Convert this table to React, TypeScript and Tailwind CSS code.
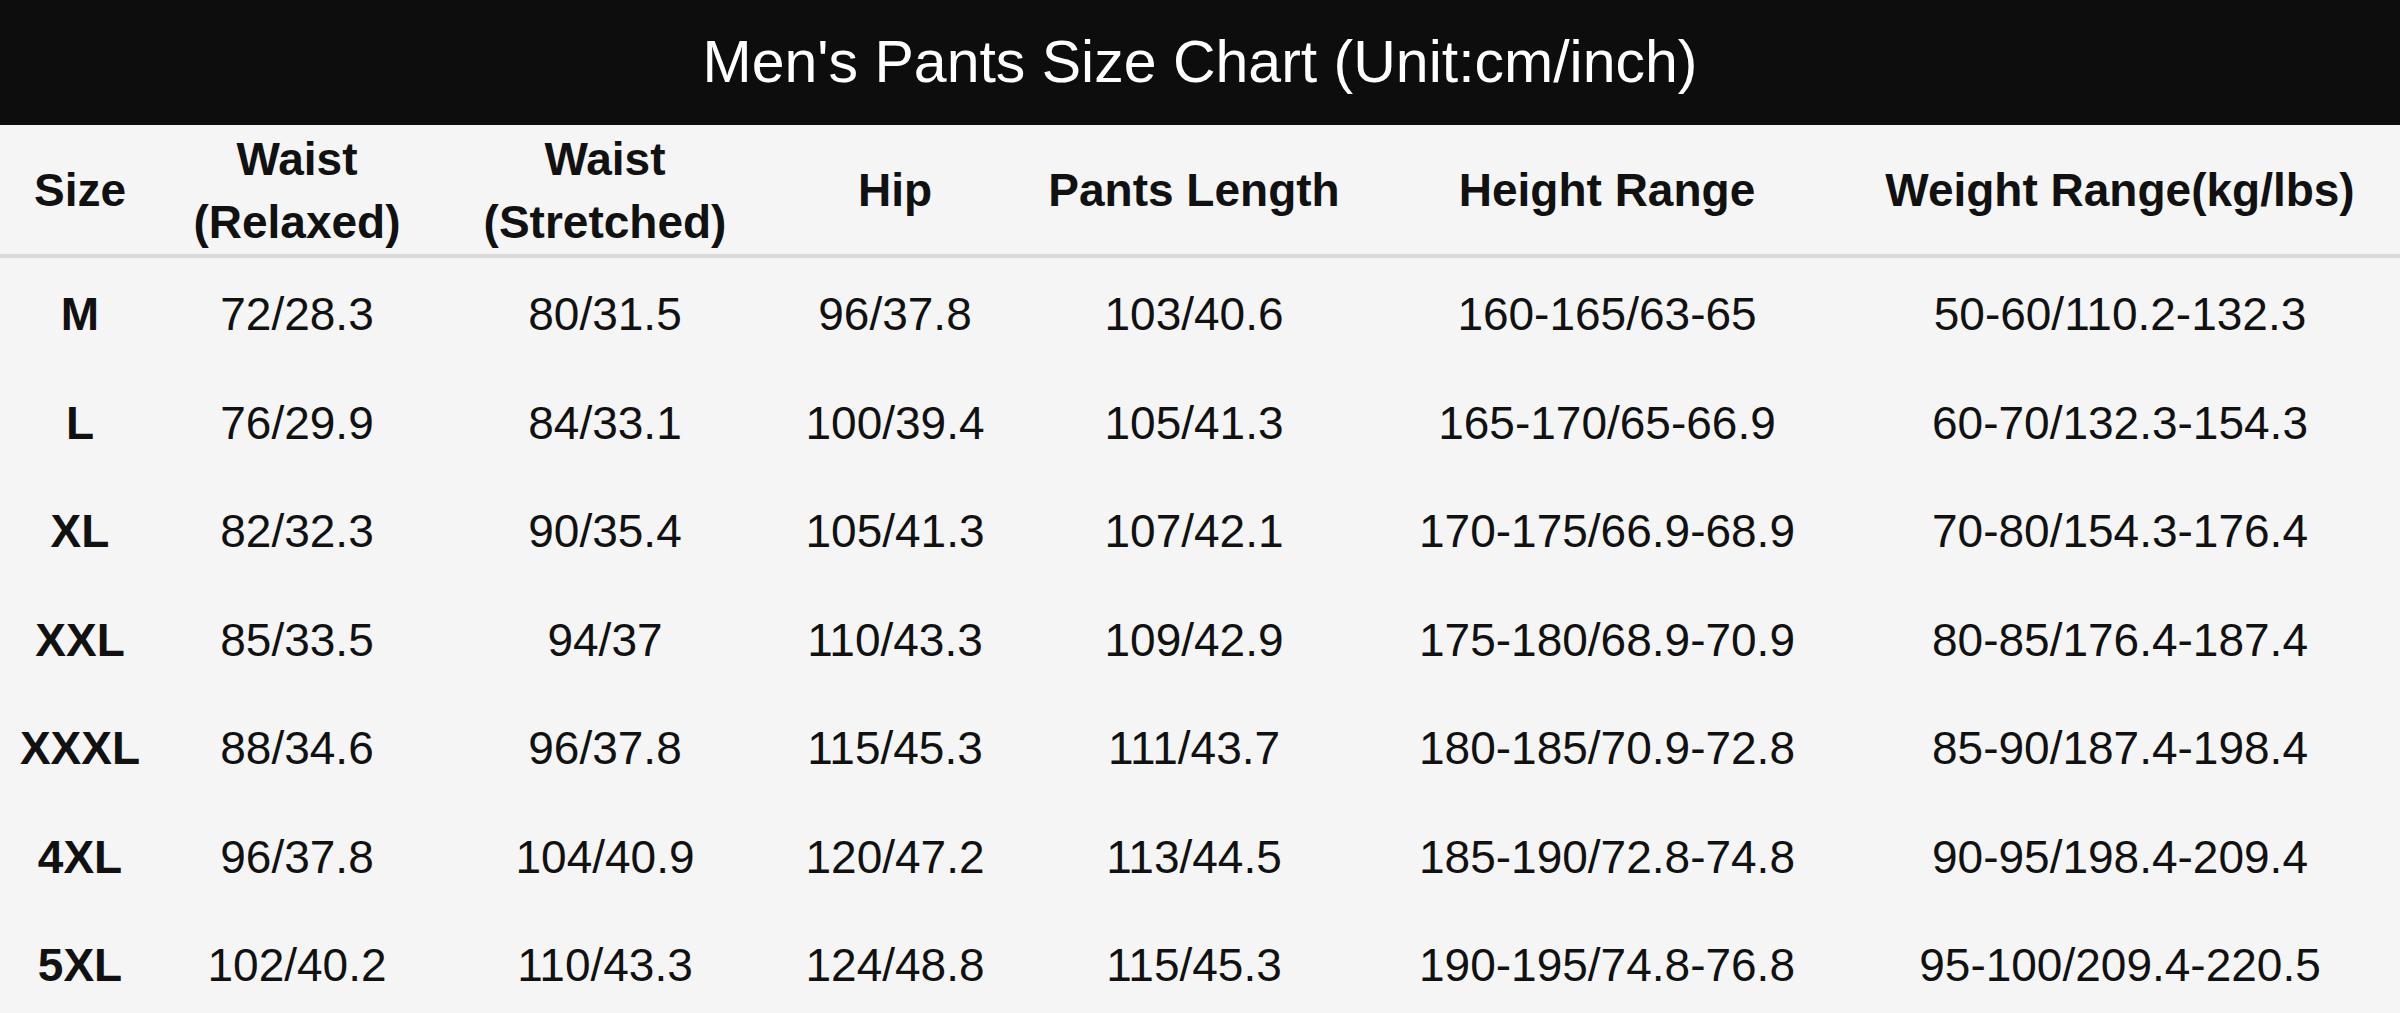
const headers: string[][] = [
  ["Size"],
  ["Waist", "(Relaxed)"],
  ["Waist", "(Stretched)"],
  ["Hip"],
  ["Pants Length"],
  ["Height Range"],
  ["Weight Range(kg/lbs)"],
];

const rows: string[][] = [
  ["M", "72/28.3", "80/31.5", "96/37.8", "103/40.6", "160-165/63-65", "50-60/110.2-132.3"],
  ["L", "76/29.9", "84/33.1", "100/39.4", "105/41.3", "165-170/65-66.9", "60-70/132.3-154.3"],
  ["XL", "82/32.3", "90/35.4", "105/41.3", "107/42.1", "170-175/66.9-68.9", "70-80/154.3-176.4"],
  ["XXL", "85/33.5", "94/37", "110/43.3", "109/42.9", "175-180/68.9-70.9", "80-85/176.4-187.4"],
  ["XXXL", "88/34.6", "96/37.8", "115/45.3", "111/43.7", "180-185/70.9-72.8", "85-90/187.4-198.4"],
  ["4XL", "96/37.8", "104/40.9", "120/47.2", "113/44.5", "185-190/72.8-74.8", "90-95/198.4-209.4"],
  ["5XL", "102/40.2", "110/43.3", "124/48.8", "115/45.3", "190-195/74.8-76.8", "95-100/209.4-220.5"],
];

const cols = "grid grid-cols-[160px_274px_342px_238px_360px_466px_560px]";

export default function App() {
  return (
    <div className="w-[2400px] h-[1013px] overflow-hidden bg-[#f5f5f5] text-black font-['Liberation_Sans',Arial,sans-serif]">
      <div className="h-[125px] bg-[#0d0d0d] flex items-center justify-center">
        <h1 className="text-white text-[59px] leading-none">Men's Pants Size Chart (Unit:cm/inch)</h1>
      </div>
      <div className={`${cols} h-[133px] border-b-4 border-[#dadada]`}>
        {headers.map((h, i) => (
          <div key={i} className="flex flex-col items-center justify-center pt-[2px] text-[46px] leading-[63px] font-bold text-[#111]">
            {h.map((l) => (
              <span key={l}>{l}</span>
            ))}
          </div>
        ))}
      </div>
      {rows.map((r) => (
        <div key={r[0]} className={`${cols} h-[108.5px]`}>
          {r.map((c, i) => (
            <div
              key={i}
              className={`flex items-center justify-center pt-[4px] text-[46px] leading-none text-[#111] ${i === 0 ? "font-bold" : ""}`}
            >
              {c}
            </div>
          ))}
        </div>
      ))}
    </div>
  );
}
